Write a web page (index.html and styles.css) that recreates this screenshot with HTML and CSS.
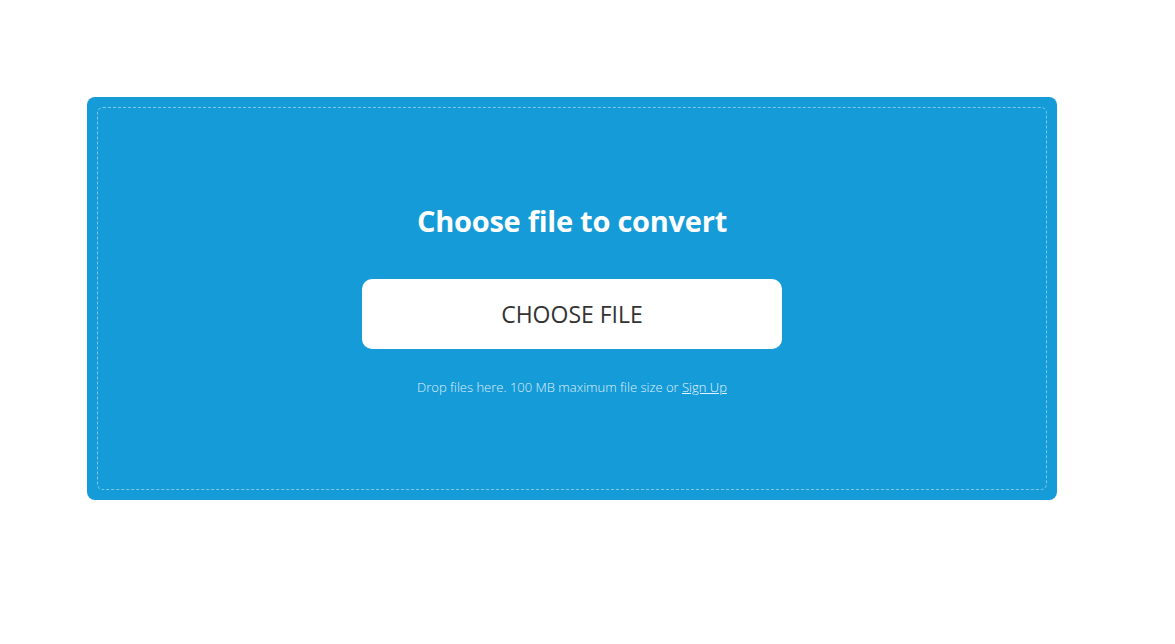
FILE: index.html
```html
<!DOCTYPE html>
<html>
<head>
<meta charset="utf-8">
<link rel="stylesheet" href="styles.css">
</head>
<body>
<div class="page">
  <div class="dropzone">
    <div class="inner">
      <h1 class="title">Choose file to convert</h1>
      <button class="choose">CHOOSE FILE</button>
      <p class="hint">Drop files here. 100 MB maximum file size or <a href="#" class="link">Sign Up</a></p>
    </div>
  </div>
</div>
</body>
</html>
```

FILE: styles.css
```css
html, body {
  margin: 0;
  padding: 0;
  background: #ffffff;
  font-family: "Open Sans", "Noto Sans", sans-serif;
}
.page {
  padding: 97px 0 0 87px;
}
.dropzone {
  width: 970px;
  height: 403px;
  box-sizing: border-box;
  background: #159bd7;
  border-radius: 8px;
  padding: 10px;
}
.inner {
  height: 100%;
  box-sizing: border-box;
  border: 1px dashed rgba(255, 255, 255, 0.45);
  border-radius: 6px;
  display: flex;
  flex-direction: column;
  align-items: center;
  padding-top: 95px;
}
.title {
  margin: 0;
  color: #ffffff;
  font-size: 29px;
  font-weight: 700;
  line-height: 36px;
  letter-spacing: -0.25px;
}
.choose {
  margin-top: 40px;
  width: 420px;
  height: 70px;
  border: none;
  border-radius: 10px;
  background: #ffffff;
  color: #333333;
  font-family: inherit;
  font-size: 23px;
  font-weight: 400;
  cursor: pointer;
}
.hint {
  margin: 29px 0 0;
  color: rgba(255, 255, 255, 0.88);
  font-size: 13px;
  font-weight: 300;
  line-height: 18px;
}
.link {
  color: #e6f5ff;
  text-decoration: underline;
}
```
